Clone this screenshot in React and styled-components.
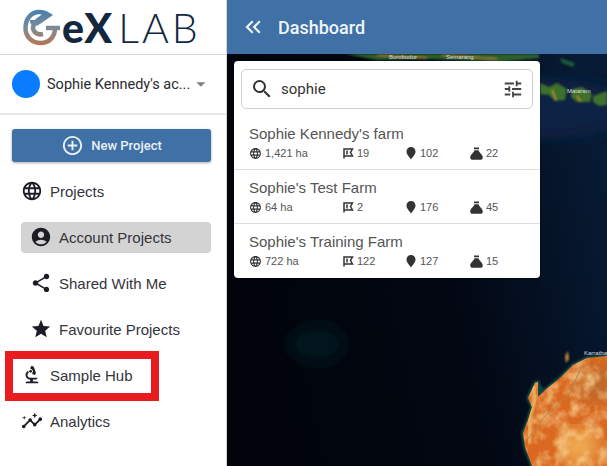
import styled, { createGlobalStyle } from "styled-components";
import {
  MdAccountCircle,
  MdAddCircleOutline,
  MdArrowDropDown,
  MdBiotech,
  MdInsights,
  MdKeyboardDoubleArrowLeft,
  MdLanguage,
  MdSearch,
  MdShare,
  MdStar,
  MdTune,
} from "react-icons/md";

const farms = [
  { name: "Sophie Kennedy's farm", area: "1,421 ha", fields: 19, points: 102, samples: 22 },
  { name: "Sophie's Test Farm", area: "64 ha", fields: 2, points: 176, samples: 45 },
  { name: "Sophie's Training Farm", area: "722 ha", fields: 122, points: 127, samples: 15 },
];

const AUSTRALIA = "M305 412L298 393L296 379L301 366L305 353L301 344L308 329L311 328L311 343L318 336L333 324L346 311L360 304L380 302V412Z";

function LogoMark() {
  return (
    <svg width="38" height="37" viewBox="23 6 38 37" fill="none">
      <defs>
        <linearGradient id="logoFade" x1="0" y1="0" x2="0" y2="1">
          <stop offset="0" stopColor="#4d80ad" />
          <stop offset="0.5" stopColor="#7b8b98" />
          <stop offset="1" stopColor="#b07a5a" />
        </linearGradient>
      </defs>
      <path
        d="M60 25H46M55 25C55 34 49 40 41 40C32 40 25.500 34 25.500 25C25.500 15 32 9 39 9C43 9 46 10 49 12L39 19C35 22 32 21 32 17M49 12C45 12 42 14 38 17C33 21 32 25 34 28C36 31 39 32 43 31"
        stroke="url(#logoFade)"
        strokeWidth="4.500"
      />
    </svg>
  );
}

function FlagIcon() {
  return (
    <svg width="12" height="12" viewBox="0 0 12 12" fill="none" stroke="#333" strokeWidth="1.500">
      <path d="M2 11.500V2H10.500L8.500 5.500L10.500 9H2" />
      <path d="M5 3.500V7.500" />
    </svg>
  );
}

function PinIcon() {
  return (
    <svg width="12" height="14" viewBox="0 0 12 14">
      <path fill="#333" d="M6 13.500C4.500 11 1.500 8.800 1.500 5.500C1.500 2.800 3.500 1 6 1C8.500 1 10.500 2.800 10.500 5.500C10.500 8.800 7.500 11 6 13.500Z" />
    </svg>
  );
}

function BagIcon() {
  return (
    <svg width="13" height="13" viewBox="0 0 13 13">
      <path fill="#333" d="M4 0.500H9V2.200H4ZM4.500 3.200H8.500C9 5.500 12.800 7.500 12.800 10.500C12.800 12 11.500 12.800 10.500 12.800H2.500C1.500 12.800 0.200 12 0.200 10.500C0.200 7.500 4 5.500 4.500 3.200Z" />
    </svg>
  );
}

function SatelliteMap() {
  return (
    <MapImage viewBox="0 0 380 412" preserveAspectRatio="none">
      <defs>
        <linearGradient id="sea" x1="0" y1="0.6" x2="1" y2="0.35">
          <stop offset="0" stopColor="#01040a" />
          <stop offset="0.55" stopColor="#020712" />
          <stop offset="1" stopColor="#071a33" />
        </linearGradient>
        <filter id="soft1"><feGaussianBlur stdDeviation="0.800" /></filter>
        <filter id="soft8"><feGaussianBlur stdDeviation="9" /></filter>
        <filter id="grain" x="0" y="0" width="100%" height="100%">
          <feTurbulence type="fractalNoise" baseFrequency="0.07" numOctaves="3" seed="4" />
          <feColorMatrix values="0 0 0 0 0.93  0 0 0 0 0.62  0 0 0 0 0.27  2.600 0 0 0 -1.050" />
        </filter>
        <clipPath id="coast">
          <path d={AUSTRALIA} />
        </clipPath>
      </defs>

      <rect width="380" height="412" fill="url(#sea)" />
      <ellipse cx="320" cy="55" rx="80" ry="30" fill="#0c2144" filter="url(#soft8)" />
      <ellipse cx="90" cy="290" rx="28" ry="20" fill="#06121f" filter="url(#soft8)" />

      <g filter="url(#soft1)">
        <path d="M118 0H312V4L272 8L205 5L150 6Z" fill="#2f5f2c" />
        <path d="M150 1L200 4M215 1L270 5" stroke="#c8883a" strokeWidth="1" fill="none" />
        <path d="M333 4L348 9L346 13L335 9Z" fill="#1f5a3a" />
        <path d="M313 29L322 33L330 29L340 35L338 46L328 47L322 41L313 40Z" fill="#3c6f2c" />
        <path d="M345 35L355 33L365 40L363 48L350 48L344 43Z" fill="#436f2c" />
        <path d="M366 42L380 37V51L372 52L366 48Z" fill="#3f6f2f" />
        <path d="M325 36L329 46M350 42L354 48" stroke="#c99a3a" strokeWidth="1.200" fill="none" />
      </g>

      <path d={AUSTRALIA} fill="none" stroke="#15584a" strokeWidth="3" filter="url(#soft1)" />
      <path d="M338 302L341 297L342 305L339 309Z" fill="#b9863a" filter="url(#soft1)" />
      <path d="M311 345L311 329L317 335Z" fill="#0f4a4a" filter="url(#soft1)" />

      <g clipPath="url(#coast)">
        <rect x="290" y="295" width="90" height="117" fill="#da6820" />
        <ellipse cx="372" cy="330" rx="24" ry="20" fill="#b9692f" opacity="0.8" filter="url(#soft8)" />
        <ellipse cx="352" cy="392" rx="20" ry="18" fill="#f0ad52" filter="url(#soft8)" />
        <rect x="290" y="295" width="90" height="117" filter="url(#grain)" opacity="0.8" />
        <path d="M302 390L303 362L308 345L306 332" stroke="#e8b060" strokeWidth="4" fill="none" filter="url(#soft1)" />
        <path d="M300 386L318 362L342 340L355 312" stroke="#a88a55" strokeWidth="1" fill="none" />
      </g>

      <MapLabel x="162" y="5">Borobudur</MapLabel>
      <MapLabel x="219" y="5">Semarang</MapLabel>
      <MapLabel x="340" y="39">Mataram</MapLabel>
      <MapLabel x="357" y="301">Karratha</MapLabel>
    </MapImage>
  );
}

export default function App() {
  return (
    <>
      <GlobalStyle />
      <Page>
        <Sidebar>
          <LogoBar>
            <LogoMark />
            <LogoText>
              <b>eX</b>
              <span>LAB</span>
            </LogoText>
          </LogoBar>

          <AccountRow>
            <Avatar />
            <AccountName>Sophie Kennedy's ac...</AccountName>
            <MdArrowDropDown size={26} color="#808080" />
          </AccountRow>

          <NewProject>
            <MdAddCircleOutline size={23} />
            New Project
          </NewProject>

          <Nav>
            <NavRow>
              <MdLanguage size={22} />
              Projects
            </NavRow>
            <NavRow $sub $active>
              <MdAccountCircle size={22} />
              Account Projects
            </NavRow>
            <NavRow $sub>
              <MdShare size={22} />
              Shared With Me
            </NavRow>
            <NavRow $sub>
              <MdStar size={22} />
              Favourite Projects
            </NavRow>
            <NavRow>
              <MdBiotech size={22} />
              Sample Hub
              <Highlight />
            </NavRow>
            <NavRow>
              <MdInsights size={22} />
              Analytics
            </NavRow>
          </Nav>
        </Sidebar>

        <Main>
          <TopBar>
            <MdKeyboardDoubleArrowLeft size={26} />
            <Title>Dashboard</Title>
          </TopBar>

          <MapArea>
            <SatelliteMap />
            <SearchCard>
              <SearchField>
                <MdSearch size={24} color="#333" />
                <SearchText>sophie</SearchText>
                <MdTune size={22} color="#444" />
              </SearchField>
              {farms.map((farm) => (
                <FarmRow key={farm.name}>
                  <FarmName>{farm.name}</FarmName>
                  <FarmStats>
                    <Stat>
                      <MdLanguage size={13} color="#333" />
                      {farm.area}
                    </Stat>
                    <Stat>
                      <FlagIcon />
                      {farm.fields}
                    </Stat>
                    <Stat>
                      <PinIcon />
                      {farm.points}
                    </Stat>
                    <Stat>
                      <BagIcon />
                      {farm.samples}
                    </Stat>
                  </FarmStats>
                </FarmRow>
              ))}
            </SearchCard>
          </MapArea>
        </Main>
      </Page>
    </>
  );
}

const GlobalStyle = createGlobalStyle`
  html, body {
    margin: 0;
    padding: 0;
    background: #fff;
    font-family: Roboto, "Liberation Sans", sans-serif;
  }
  * {
    box-sizing: border-box;
  }
`;

const Page = styled.div`
  display: flex;
  width: 607px;
  height: 466px;
  overflow: hidden;
`;

const Sidebar = styled.aside`
  width: 227px;
  flex-shrink: 0;
  background: #fff;
  border-right: 1px solid #d5d5d5;
  display: flex;
  flex-direction: column;
`;

const LogoBar = styled.div`
  height: 55px;
  padding: 1px 0 0 23px;
  display: flex;
  align-items: center;
  gap: 1px;
  border-bottom: 1px solid #d8d8d8;
`;

const LogoText = styled.div`
  font-family: Lato, sans-serif;
  font-size: 41px;
  line-height: 1;
  color: #13283f;
  white-space: nowrap;
  b {
    font-weight: 900;
    letter-spacing: 1px;
  }
  span {
    font-weight: 300;
    margin-left: 5px;
    letter-spacing: 3px;
  }
`;

const AccountRow = styled.div`
  height: 60px;
  padding: 0 14px 0 12px;
  display: flex;
  align-items: center;
  border-bottom: 2px solid #e8e8e8;
`;

const Avatar = styled.div`
  width: 28px;
  height: 28px;
  border-radius: 50%;
  background: #0a7cff;
  flex-shrink: 0;
`;

const AccountName = styled.div`
  margin-left: 7px;
  flex: 1;
  font-size: 14.500px;
  color: #2b2b33;
  white-space: nowrap;
`;

const NewProject = styled.button`
  margin: 14px 15px 0 12px;
  height: 33px;
  border: none;
  border-radius: 3px;
  background: #3f71a6;
  box-shadow: 0 1px 3px rgba(0, 0, 0, 0.35);
  color: #e9eff5;
  font-family: inherit;
  font-size: 13px;
  font-weight: 500;
  display: flex;
  align-items: center;
  justify-content: center;
  gap: 7px;
`;

const Nav = styled.nav`
  margin-top: 14px;
  display: flex;
  flex-direction: column;
  gap: 15px;
`;

const NavRow = styled.div`
  position: relative;
  height: 31px;
  margin: 0 15px 0 21px;
  padding-left: ${({ $sub }) => ($sub ? "9px" : "0")};
  padding-bottom: 1px;
  border-radius: 4px;
  background: ${({ $active }) => ($active ? "#d3d3d3" : "transparent")};
  display: flex;
  align-items: center;
  gap: 7px;
  font-family: "Liberation Sans", sans-serif;
  font-size: 15px;
  color: #34343c;
  svg {
    color: #1c1c24;
    flex-shrink: 0;
  }
`;

const Highlight = styled.div`
  position: absolute;
  left: -16px;
  top: -9px;
  width: 154px;
  height: 50px;
  border: 8px solid #e91c20;
`;

const Main = styled.main`
  flex: 1;
  display: flex;
  flex-direction: column;
  min-width: 0;
`;

const TopBar = styled.header`
  height: 54px;
  flex-shrink: 0;
  padding-left: 13px;
  background: #3f71a6;
  color: #f1f5f9;
  display: flex;
  align-items: center;
  gap: 12px;
`;

const Title = styled.div`
  font-size: 18px;
  font-weight: 500;
`;

const MapArea = styled.div`
  position: relative;
  flex: 1;
  background: #020814;
`;

const MapImage = styled.svg`
  display: block;
  width: 100%;
  height: 100%;
`;

const MapLabel = styled.text`
  font-family: "Liberation Sans", sans-serif;
  font-size: 6px;
  fill: #d8dde0;
`;

const SearchCard = styled.div`
  position: absolute;
  left: 7px;
  top: 7px;
  width: 306px;
  height: 217px;
  padding: 8px 0 0;
  background: #fff;
  border-radius: 4px;
  box-shadow: 0 1px 2px rgba(0, 0, 0, 0.5);
`;

const SearchField = styled.div`
  height: 40px;
  margin: 0 7px 7px;
  padding: 0 8px;
  border: 1px solid #cfcfcf;
  border-radius: 5px;
  display: flex;
  align-items: center;
`;

const SearchText = styled.div`
  flex: 1;
  margin-left: 7px;
  font-size: 15px;
  color: #333;
`;

const FarmRow = styled.div`
  height: 54px;
  padding: 9px 14px 0 15px;
  border-bottom: 1px solid #ddd;
  &:last-child {
    border-bottom: none;
  }
`;

const FarmName = styled.div`
  font-family: "Liberation Sans", sans-serif;
  font-size: 15px;
  line-height: 18px;
  color: #555;
`;

const FarmStats = styled.div`
  margin-top: 2px;
  height: 16px;
  display: grid;
  grid-template-columns: 93px 63px 65px auto;
`;

const Stat = styled.div`
  display: flex;
  align-items: center;
  gap: 3px;
  font-family: "Liberation Sans", sans-serif;
  font-size: 11px;
  color: #555;
`;
